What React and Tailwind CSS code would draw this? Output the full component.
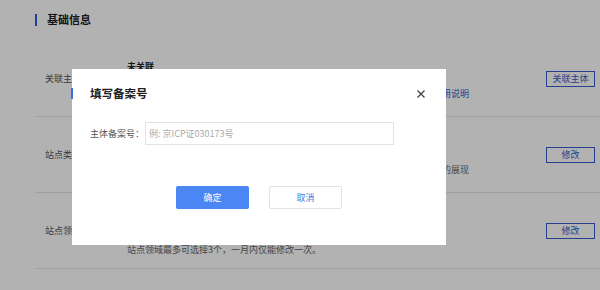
import { useState } from "react";

const rows = [
  {
    label: "关联主体",
    value: "未关联",
    desc: "关联主体后，您的站点可在搜索结果中获得更多的展现与权益，详细内容查看",
    link: "使用说明",
    action: "关联主体",
    gap: "gap-[14px]",
  },
  {
    label: "站点类型",
    value: "信息门户",
    desc: "站点类型请根据站点实际内容进行选择，设置后将会影响您的站点在搜索结果中的展现",
    action: "修改",
    gap: "gap-[14px]",
  },
  {
    label: "站点领域",
    value: "综合门户",
    desc: "站点领域最多可选择3个，一月内仅能修改一次。",
    action: "修改",
    gap: "gap-[22px]",
  },
];

function App() {
  const [beian, setBeian] = useState("");
  const [open, setOpen] = useState(true);

  return (
    <div
      className="relative h-[290px] w-[600px] overflow-hidden bg-white text-[#333]"
      style={{ fontFamily: '"Noto Sans CJK SC", "Noto Sans", sans-serif' }}
    >
      {/* 页面内容 */}
      <div className="pl-[35px]">
        <div className="flex h-[41px] items-center pb-[2px]">
          <span className="h-[12px] w-[2px] bg-[#2f5fd0]" />
          <h2 className="ml-[10px] text-[11px] font-bold leading-none text-[#222]">基础信息</h2>
        </div>
        {rows.map((row, i) => (
          <div
            key={i}
            className="flex h-[76px] items-center border-b border-[#e6e6e6] pl-[10px] pr-[5px]"
          >
            <div className="w-[82px] shrink-0 text-[9px] text-[#555]">{row.label}</div>
            <div className={`flex flex-1 flex-col pt-[3px] ${row.gap}`}>
              <div className="text-[9px] font-bold text-[#222]">{row.value}</div>
              <div className="whitespace-nowrap text-[9px] text-[#666]">
                {row.desc}
                {row.link && <span className="text-[#2f5fd0]">{row.link}</span>}
              </div>
            </div>
            <button className="h-[16px] w-[49px] shrink-0 border border-[#3a5bc7] text-[9px] leading-none text-[#3a5bc7]">
              {row.action}
            </button>
          </div>
        ))}
      </div>

      {open && (
        <div className="absolute inset-0 bg-black/30">
          <div className="absolute left-[72px] top-[69px] h-[176px] w-[374px] bg-white">
            <span className="absolute left-[-1px] top-[19px] h-[11px] w-[2px] bg-[#3a6ee0]" />
            <div className="flex h-[47px] items-center justify-between pl-[18px] pr-[21px] pt-[2px]">
              <h3 className="text-[11.5px] font-bold leading-none text-[#222]">填写备案号</h3>
              <button onClick={() => setOpen(false)} className="text-[#444]">
                <svg width="8" height="8" viewBox="0 0 8 8" fill="none" stroke="currentColor" strokeWidth="1.3">
                  <path d="M0.5 0.5 L7.5 7.5 M7.5 0.5 L0.5 7.5" />
                </svg>
              </button>
            </div>
            <div className="mt-[6px] flex items-center pl-[18px]">
              <label className="w-[55px] shrink-0 whitespace-nowrap text-[9px] leading-none text-[#555]">
                主体备案号：
              </label>
              <input
                value={beian}
                onChange={(e) => setBeian(e.target.value)}
                placeholder="例: 京ICP证030173号"
                className="h-[23px] w-[249px] shrink-0 border border-[#e3e3e3] px-[3px] text-[9px] outline-none placeholder:text-[#aaa]"
              />
            </div>
            <div className="mt-[41px] flex justify-center gap-[20px]">
              <button className="h-[23px] w-[73px] rounded-[2px] bg-[#4a86f4] text-[9px] text-white">确定</button>
              <button
                onClick={() => setOpen(false)}
                className="h-[23px] w-[73px] rounded-[2px] border border-[#e3e3e3] bg-white text-[9px] text-[#4a7ce0]"
              >
                取消
              </button>
            </div>
          </div>
        </div>
      )}
    </div>
  );
}

export default App;
